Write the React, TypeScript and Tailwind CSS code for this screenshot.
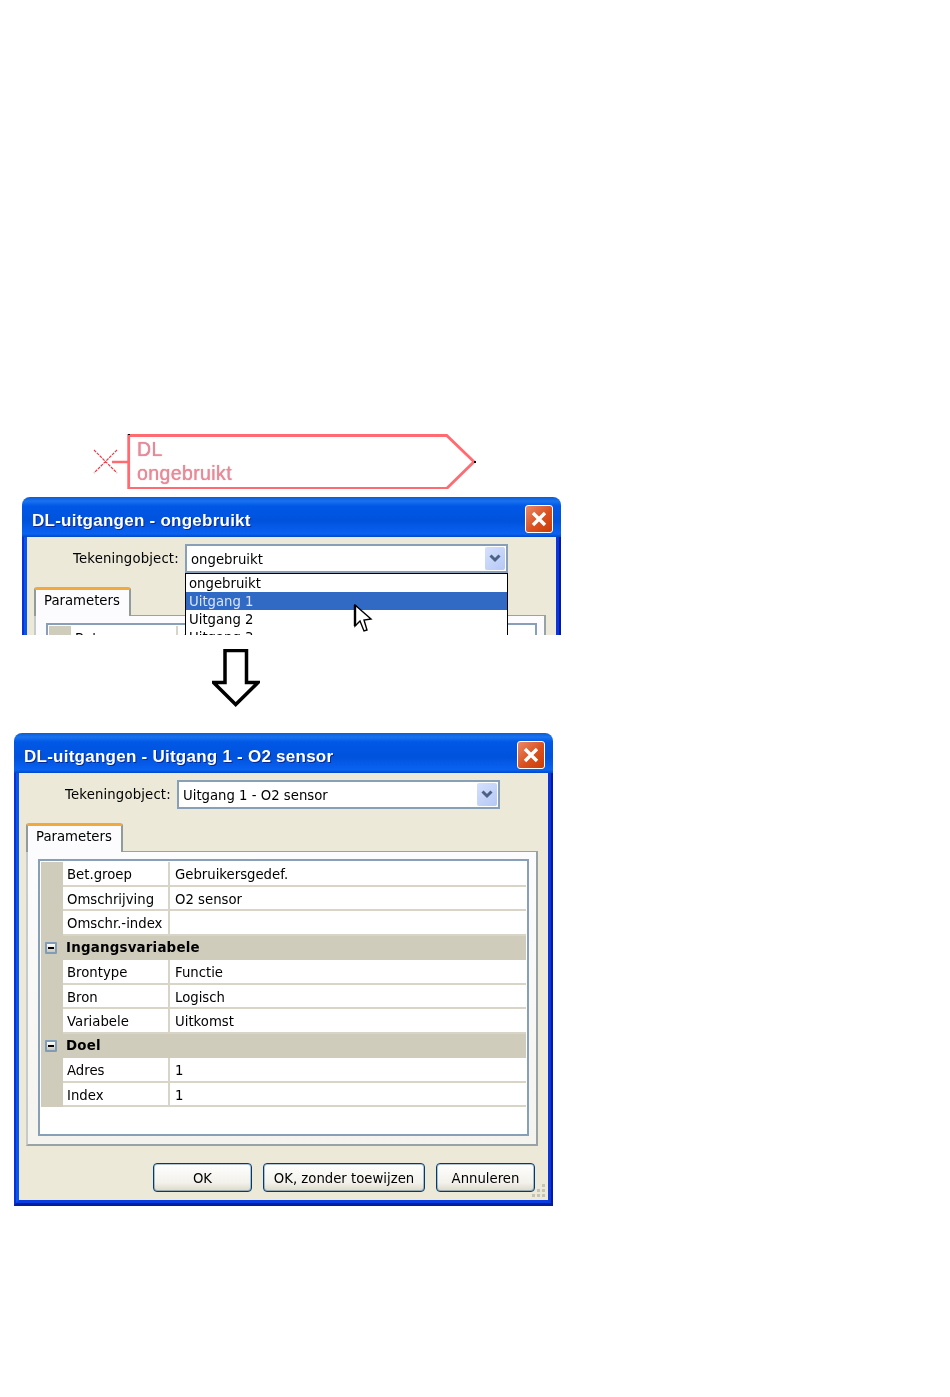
const uiFont = "font-['DejaVu_Sans',sans-serif] text-[13.25px] text-black";

const rows = [
  { name: "Bet.groep", value: "Gebruikersgedef." },
  { name: "Omschrijving", value: "O2 sensor" },
  { name: "Omschr.-index", value: "" },
  { group: "Ingangsvariabele" },
  { name: "Brontype", value: "Functie" },
  { name: "Bron", value: "Logisch" },
  { name: "Variabele", value: "Uitkomst" },
  { group: "Doel" },
  { name: "Adres", value: "1" },
  { name: "Index", value: "1" },
];

const Chevron = () => (
  <div className="flex h-[23px] w-[20px] items-center justify-center rounded-[2px] bg-[linear-gradient(135deg,#d5e0fc,#b4c8f6)]">
    <svg width="12" height="9" viewBox="0 0 12 9">
      <path d="M1.5 1.5 L6 6 L10.5 1.5" fill="none" stroke="#4d6185" strokeWidth="3" />
    </svg>
  </div>
);

const CloseButton = () => (
  <div className="flex h-[28px] w-[28px] items-center justify-center rounded-[3px] border border-white bg-[linear-gradient(135deg,#ea8a68,#d9501f_55%,#c93c06)]">
    <svg width="18" height="18" viewBox="0 0 18 18">
      <path d="M3 3 L15 15 M15 3 L3 15" stroke="white" strokeWidth="3.4" />
    </svg>
  </div>
);

const MinusBox = () => (
  <div className="flex h-[12px] w-[12px] items-center justify-center rounded-[1px] border-2 border-[#7f9db9] bg-[linear-gradient(#ffffff,#c9c6b6)]">
    <div className="h-[2px] w-[6px] bg-black" />
  </div>
);

const Grid = () => (
  <div className="mt-[6px] ml-[10px] h-[277px] w-[491px] border-2 border-[#87a0b8] bg-white p-px">
    {rows.map((row) =>
      row.group ? (
        <div key={row.group} className="flex h-[24.5px] items-center bg-[#cfccbc]">
          <div className="flex w-[22px] justify-center pr-[2px]">
            <MinusBox />
          </div>
          <span className="ml-[3px] text-[13.4px] font-bold tracking-[0.2px]">{row.group}</span>
        </div>
      ) : (
        <div key={row.name} className="flex h-[24.5px]">
          <div className="w-[22px] bg-[#cfccbc]" />
          <div className="flex w-[107px] items-center border-r-2 border-b-2 border-[#d8d5c8] pt-[4px] pl-[4px]">
            {row.name}
          </div>
          <div className="flex flex-1 items-center border-b-2 border-[#d8d5c8] pt-[4px] pl-[5px]">{row.value}</div>
        </div>
      ),
    )}
  </div>
);

const PushButton = ({ label, width }: { label: string; width: string }) => (
  <button
    className={`${width} h-[29px] rounded-[4px] border border-[#003c74] bg-[linear-gradient(#ffffff,#f2f1ea_70%,#dcd8c9)] pt-[2px] shadow-[inset_0_0_0_1px_rgba(0,60,116,0.3)] ${uiFont}`}
  >
    {label}
  </button>
);

const Grip = () => (
  <svg className="absolute right-[2px] bottom-[2px]" width="14" height="14" viewBox="0 0 14 14" fill="#c6c3b3">
    <rect x="10" y="0" width="3" height="3" />
    <rect x="5" y="5" width="3" height="3" />
    <rect x="10" y="5" width="3" height="3" />
    <rect x="0" y="10" width="3" height="3" />
    <rect x="5" y="10" width="3" height="3" />
    <rect x="10" y="10" width="3" height="3" />
  </svg>
);

const Dialog = ({
  title,
  value,
  className,
  children,
}: {
  title: string;
  value: string;
  className: string;
  children?: React.ReactNode;
}) => (
  <div className={`${className} relative w-[539px] overflow-hidden rounded-t-[8px] ${uiFont}`}>
    <div className="flex h-[40px] items-center justify-between bg-[linear-gradient(#0a5cd6,#1a72f0_4px,#0058e6_9px,#0052dc_60%,#0a62f2_92%,#0049c8)] pt-[4px] pr-[8px] pl-[10px]">
      <span className="mt-[3px] font-['Liberation_Sans',sans-serif] text-[17px] font-bold tracking-[0.25px] text-white [text-shadow:1px_1px_0_#0a2a8c]">
        {title}
      </span>
      <CloseButton />
    </div>
    <div className="border-r-2 border-b-[3px] border-l-2 border-r-[#0019a8] border-b-[#001ea0] border-l-[#0831d9]">
      <div className="border-r-[3px] border-b-[3px] border-l-[3px] border-r-[#0a35d8] border-b-[#0a3ce0] border-l-[#0a55ea]">
        <div className="relative bg-[#ece9d8] pt-[7px] pb-[8px]">
          <div className="flex items-center pl-[46px]">
            <span className="w-[112px] tracking-[0.15px]">Tekeningobject:</span>
            <div className="flex h-[29px] w-[323px] items-center justify-between border-2 border-[#87a0b8] bg-white pr-px pl-[4px]">
              <span className="mt-[2px]">{value}</span>
              <Chevron />
            </div>
          </div>
          <div className="relative z-10 mt-[14px] -mb-px ml-[7px] h-[29px] w-[97px] rounded-t-[3px] border-x-2 border-t-[3px] border-x-[#919b9c] border-t-[#f2a83a] bg-[#fcfcfe] pt-px pl-[8px]">
            Parameters
          </div>
          <div className="ml-[7px] h-[295px] w-[512px] overflow-hidden border-2 border-t border-[#98a3a6] border-l-[#c5cbcc] bg-[linear-gradient(#fcfcfe,#f4f3ee)] pt-px">
            <Grid />
          </div>
          <div className="mt-[17px] flex gap-[11px] pl-[134px]">
            <PushButton label="OK" width="w-[99px]" />
            <PushButton label="OK, zonder toewijzen" width="w-[162px]" />
            <PushButton label="Annuleren" width="w-[99px]" />
          </div>
          <Grip />
        </div>
      </div>
    </div>
    {children}
  </div>
);

const Dropdown = () => (
  <div className="absolute top-[76px] left-[163px] h-[70px] w-[323px] border border-black bg-white pl-[3px] leading-[18px]">
    <div className="h-[18px] pt-px">ongebruikt</div>
    <div className="-ml-[3px] h-[18px] bg-[#316ac5] pt-px pl-[3px] text-[#dbe4f7]">Uitgang 1</div>
    <div className="h-[18px] pt-px">Uitgang 2</div>
    <div className="h-[18px] pt-px">Uitgang 3</div>
  </div>
);

const Cursor = () => (
  <svg className="absolute top-[107px] left-[331px]" width="20" height="30" viewBox="0 0 20 30">
    <path
      d="M2 1 L2 22 L7 17 L11 27 L14 26 L11 16 L18 15 Z"
      fill="white"
      stroke="black"
      strokeWidth="1.4"
    />
    <path d="M2 1 L2 22" stroke="black" strokeWidth="2.4" />
  </svg>
);

const Shape = () => (
  <div className="relative ml-[93px] h-[55px] w-[384px] font-['Liberation_Sans',sans-serif] text-[19.5px] leading-[24px] font-medium text-[#e88a98] [text-shadow:0_0_1px_#d9707f]">
    <svg className="absolute inset-0" width="384" height="55" viewBox="0 0 384 55" fill="none">
      <path d="M36 28 H19" stroke="#ff6b70" strokeWidth="2.5" />
      <path d="M1 16 L24 39 M24 16 L1 39" stroke="#f23a44" strokeWidth="1.2" strokeDasharray="3 1" />
      <path d="M35.7 1.5 H353.7 L381 27.7 L353.7 54.5 H35.7 Z" stroke="#ff6b70" strokeWidth="2.8" />
      <rect x="35" y="0" width="2" height="1" fill="black" />
      <rect x="381" y="27" width="2" height="2" fill="black" />
    </svg>
    <div className="pt-[3px] pl-[44px] tracking-[0.4px]">
      <div>DL</div>
      <div>ongebruikt</div>
    </div>
  </div>
);

const DownArrow = () => (
  <svg className="mt-[14px] ml-[212px]" width="48" height="58" viewBox="0 0 48 58" fill="white">
    <path d="M13 1.5 H34.5 V33.5 H46 L23.7 55.5 L1.5 33.5 H13 Z" stroke="black" strokeWidth="3.5" />
  </svg>
);

export default function App() {
  return (
    <div className="h-[1397px] w-[950px] overflow-hidden bg-white pt-[434px] blur-[0.3px]">
      <Shape />
      <Dialog title="DL-uitgangen - ongebruikt" value="ongebruikt" className="mt-[8px] ml-[22px] h-[138px]">
        <Dropdown />
        <Cursor />
      </Dialog>
      <DownArrow />
      <Dialog title="DL-uitgangen - Uitgang 1 - O2 sensor" value="Uitgang 1 - O2 sensor" className="mt-[26px] ml-[14px]" />
    </div>
  );
}
